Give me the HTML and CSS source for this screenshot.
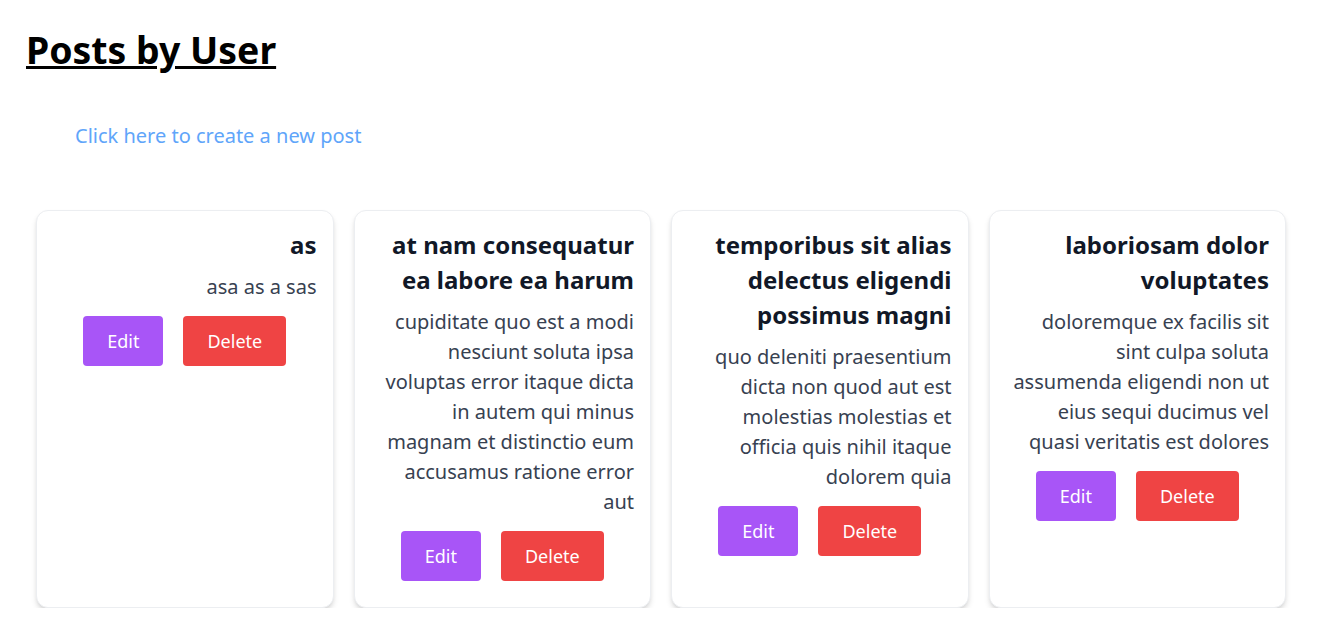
FILE: index.html
```html
<!DOCTYPE html>
<html>
<head>
<meta charset="utf-8">
<link rel="stylesheet" href="styles.css">
</head>
<body>
<div class="page">
  <h1 class="page-title">Posts by User</h1>
  <a class="new-link" href="#">Click here to create a new post</a>
  <div class="grid">
    <div class="card">
      <h2 class="card-title">as</h2>
      <p class="card-body">asa as a sas</p>
      <div class="actions">
        <button class="btn btn-edit">Edit</button>
        <button class="btn btn-delete">Delete</button>
      </div>
    </div>
    <div class="card">
      <h2 class="card-title">at nam consequatur ea labore ea harum</h2>
      <p class="card-body">cupiditate quo est a modi nesciunt soluta ipsa voluptas error itaque dicta in autem qui minus magnam et distinctio eum accusamus ratione error aut</p>
      <div class="actions">
        <button class="btn btn-edit">Edit</button>
        <button class="btn btn-delete">Delete</button>
      </div>
    </div>
    <div class="card">
      <h2 class="card-title">temporibus sit alias delectus eligendi possimus magni</h2>
      <p class="card-body">quo deleniti praesentium dicta non quod aut est molestias molestias et officia quis nihil itaque dolorem quia</p>
      <div class="actions">
        <button class="btn btn-edit">Edit</button>
        <button class="btn btn-delete">Delete</button>
      </div>
    </div>
    <div class="card">
      <h2 class="card-title">laboriosam dolor voluptates</h2>
      <p class="card-body">doloremque ex facilis sit sint culpa soluta assumenda eligendi non ut eius sequi ducimus vel quasi veritatis est dolores</p>
      <div class="actions">
        <button class="btn btn-edit">Edit</button>
        <button class="btn btn-delete">Delete</button>
      </div>
    </div>
  </div>
</div>
</body>
</html>
```

FILE: styles.css
```css
* { box-sizing: border-box; }
html, body { margin: 0; padding: 0; background: #fff; }
body { font-family: "Noto Sans", "Open Sans", sans-serif; color: #111827; }
.page { padding: 24px 46px 0 26px; display: flex; flex-direction: column; align-items: flex-start; }
.page-title {
  margin: 0;
  font-size: 37.4px;
  line-height: 52px;
  font-weight: 700;
  text-decoration: underline;
  color: #000;
}
.new-link {
  margin: 45px 0 0 49px;
  font-size: 20px;
  line-height: 30px;
  color: #60a5fa;
  text-decoration: none;
}
.grid {
  align-self: stretch;
  margin: 59px 0 0 10px;
  display: grid;
  grid-template-columns: repeat(4, 1fr);
  gap: 20px;
}
.card {
  background: #fff;
  border: 1px solid #eceef1;
  border-radius: 12px;
  box-shadow: 0 4px 6px -1px rgba(0,0,0,0.14), 0 2px 4px -2px rgba(0,0,0,0.12);
  padding: 16px;
  text-align: right;
}
.card-title {
  margin: 0 0 10px;
  font-size: 24px;
  line-height: 35px;
  font-weight: 700;
  color: #111827;
}
.card-body {
  margin: 0 0 4px;
  font-size: 20px;
  line-height: 30px;
  color: #374151;
}
.actions {
  display: flex;
  justify-content: center;
}
.btn {
  margin: 10px;
  border: 0;
  border-radius: 4px;
  padding: 11px 24px;
  font-family: inherit;
  font-size: 18px;
  line-height: 28px;
  color: #fff;
}
.btn-edit { background: #a855f7; }
.btn-delete { background: #ef4444; }
```
